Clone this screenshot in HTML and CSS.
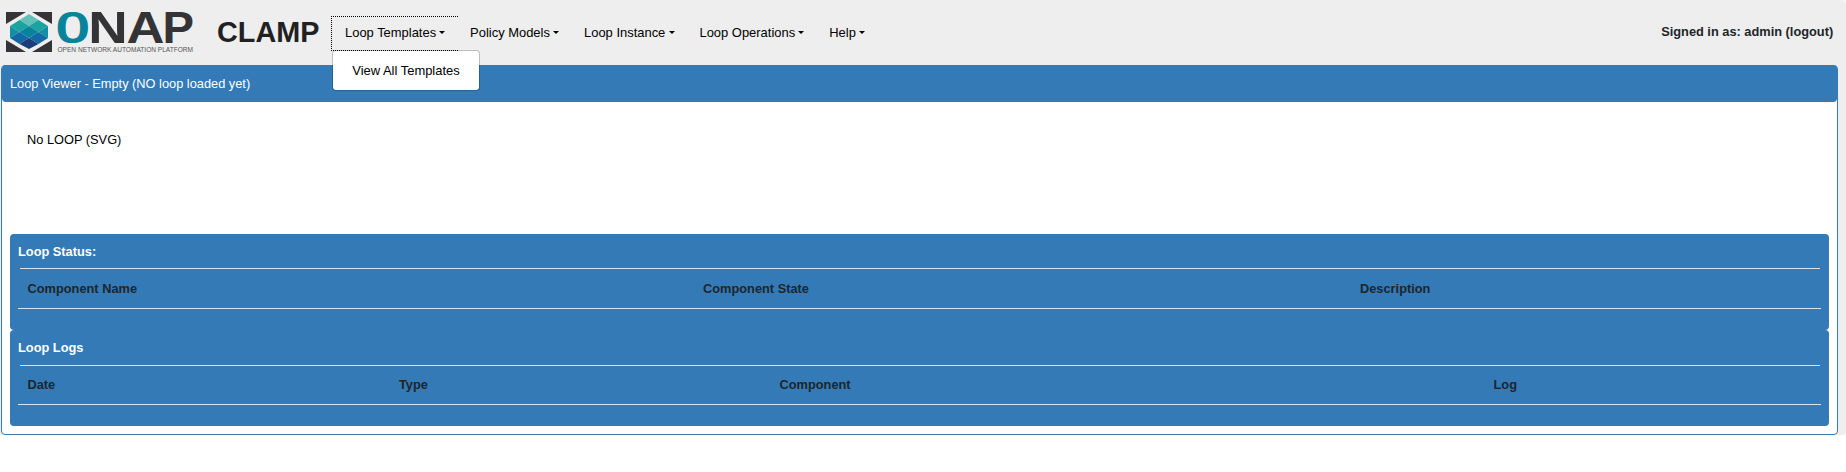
FILE: index.html
```
<!DOCTYPE html>
<html lang="en">
<head>
<meta charset="utf-8">
<title>CLAMP</title>
<link rel="stylesheet" href="styles.css">
</head>
<body>
<div class="app">
  <header class="navbar">
    <svg class="logo" width="190" height="44" viewBox="0 0 190 44">
      <g fill="#343436">
        <path d="M0 0H20L0 12zM46 0H26L46 12zM0 40H20L0 28zM46 40H26L46 28z"/>
      </g>
      <path fill="#62c0b9" d="M23 2L32.500 8L23 14L13.500 8z"/>
      <path fill="#1aa39f" d="M13.500 8L23 14L13.500 20L4 14zM32.500 8L42 14L32.500 20L23 14z"/>
      <path fill="#07849c" d="M23 14L32.500 20L23 26L13.500 20z"/>
      <path fill="#138fa3" d="M4 14L13.500 20L4 26zM42 14V26L32.500 20z"/>
      <path fill="#1269a5" d="M13.500 20L23 26L13.500 32L4 26zM32.500 20L42 26L32.500 32L23 26z"/>
      <path fill="#1c3d77" d="M23 26L32.500 32L23 37L13.500 32z"/>
      <g class="logo-word">
        <text class="logo-o" x="49.300" y="30" textLength="35" lengthAdjust="spacingAndGlyphs">O</text>
        <text x="82.300" y="31" textLength="39.500" lengthAdjust="spacingAndGlyphs">N</text>
        <text x="120.500" y="31" textLength="38" lengthAdjust="spacingAndGlyphs">A</text>
        <text x="156.500" y="31" textLength="31.500" lengthAdjust="spacingAndGlyphs">P</text>
      </g>
      <text class="logo-tag" x="51.500" y="39.500" textLength="135.500" lengthAdjust="spacingAndGlyphs">OPEN NETWORK AUTOMATION PLATFORM</text>
    </svg>
    <h1 class="brand">CLAMP</h1>
    <nav class="menu">
      <div class="item open"><a class="toggle">Loop Templates</a>
        <div class="dropdown"><a>View All Templates</a></div>
      </div>
      <div class="item"><a class="toggle">Policy Models</a></div>
      <div class="item"><a class="toggle">Loop Instance</a></div>
      <div class="item"><a class="toggle">Loop Operations</a></div>
      <div class="item"><a class="toggle">Help</a></div>
    </nav>
    <div class="user">Signed in as: admin (logout)</div>
  </header>
  <main class="viewer">
    <div class="viewer-title">Loop Viewer - Empty (NO loop loaded yet)</div>
    <div class="loop-svg">No LOOP (SVG)</div>
    <section class="panel">
      <h2 class="panel-title">Loop Status:</h2>
      <div class="thead status"><span>Component Name</span><span>Component State</span><span>Description</span></div>
    </section>
    <section class="panel logs">
      <h2 class="panel-title">Loop Logs</h2>
      <div class="thead log-cols"><span>Date</span><span>Type</span><span>Component</span><span>Log</span></div>
    </section>
  </main>
</div>
</body>
</html>
```
FILE: styles.css
```
* { box-sizing: border-box; }
body { margin: 0; background: #fff; color: #000; font: 12.8px/20px "Liberation Sans", Arial, sans-serif; }
.app { background: #eee; border-radius: 0 4px 4px 0; height: 435px; }
.navbar { display: flex; height: 65px; padding-left: 6px; }
.logo { margin-top: 12px; flex: none; overflow: visible; }
.logo-word { font-size: 43.500px; font-weight: bold; fill: #343436; }
.logo-o { fill: #07849c; stroke: #07849c; stroke-width: 1.200px; font-family: "DejaVu Sans Mono", monospace; font-size: 39.500px; font-weight: normal; }
.logo-tag { font-size: 6.5px; fill: #555; }
.brand { margin: 15px 0 0 21px; width: 114px; font-size: 28.800px; line-height: 34px; color: #212121; }
.menu { display: flex; height: 35px; margin-top: 16px; font-size: 12.950px; }
.item { position: relative; padding: 7px 12.450px 0; white-space: nowrap; }
.open { border: 1px dotted #000; border-right: 0; padding: 6px 12.300px 0 13px; }
.toggle::after { content: ""; display: inline-block; margin-left: 3.264px; vertical-align: 3.264px; border: 3.840px solid transparent; border-top-color: #000; border-bottom: 0; }
.dropdown { position: absolute; top: 33px; left: 0; z-index: 2; width: 148px; height: 41px; padding: 10px 0 0 19.300px; background: #fff; background-clip: padding-box; border: 1px solid rgba(0,0,0,.2); border-radius: 4px; }
.user { margin: 22px 12.800px 0 auto; font-weight: bold; color: #212529; }
.viewer { margin: 0 8px 0 1px; height: 370px; background: #fff; border: 1px solid #337ab7; border-radius: 4px; }
.viewer-title { margin: -1px 0 0; height: 37px; padding: 9px 8px; background: #337ab7; color: #fff; border-radius: 4px; }
.loop-svg { height: 132px; padding: 28px 25px; }
.panel { margin: 0 8px; height: 96px; padding: 8px; background: #337ab7; border-radius: 4px; }
.panel-title { margin: 0; height: 26px; font-size: 12.800px; line-height: 20px; color: #fff; }
.thead { display: grid; position: relative; height: 41px; padding: 11px 0 0 9.500px; border-bottom: 1px solid #dee2e6; font-weight: bold; color: #212529; }
.thead::before { content: ""; position: absolute; top: 0; left: 2px; right: 1px; height: 1px; background: #dee2e6; }
.status { grid-template-columns: 675.500px 657px 1fr; }
.log-cols { grid-template-columns: 371.500px 380.500px 714px 1fr; height: 40px; padding-top: 10px; }
.logs .panel-title { height: 27px; }
```
